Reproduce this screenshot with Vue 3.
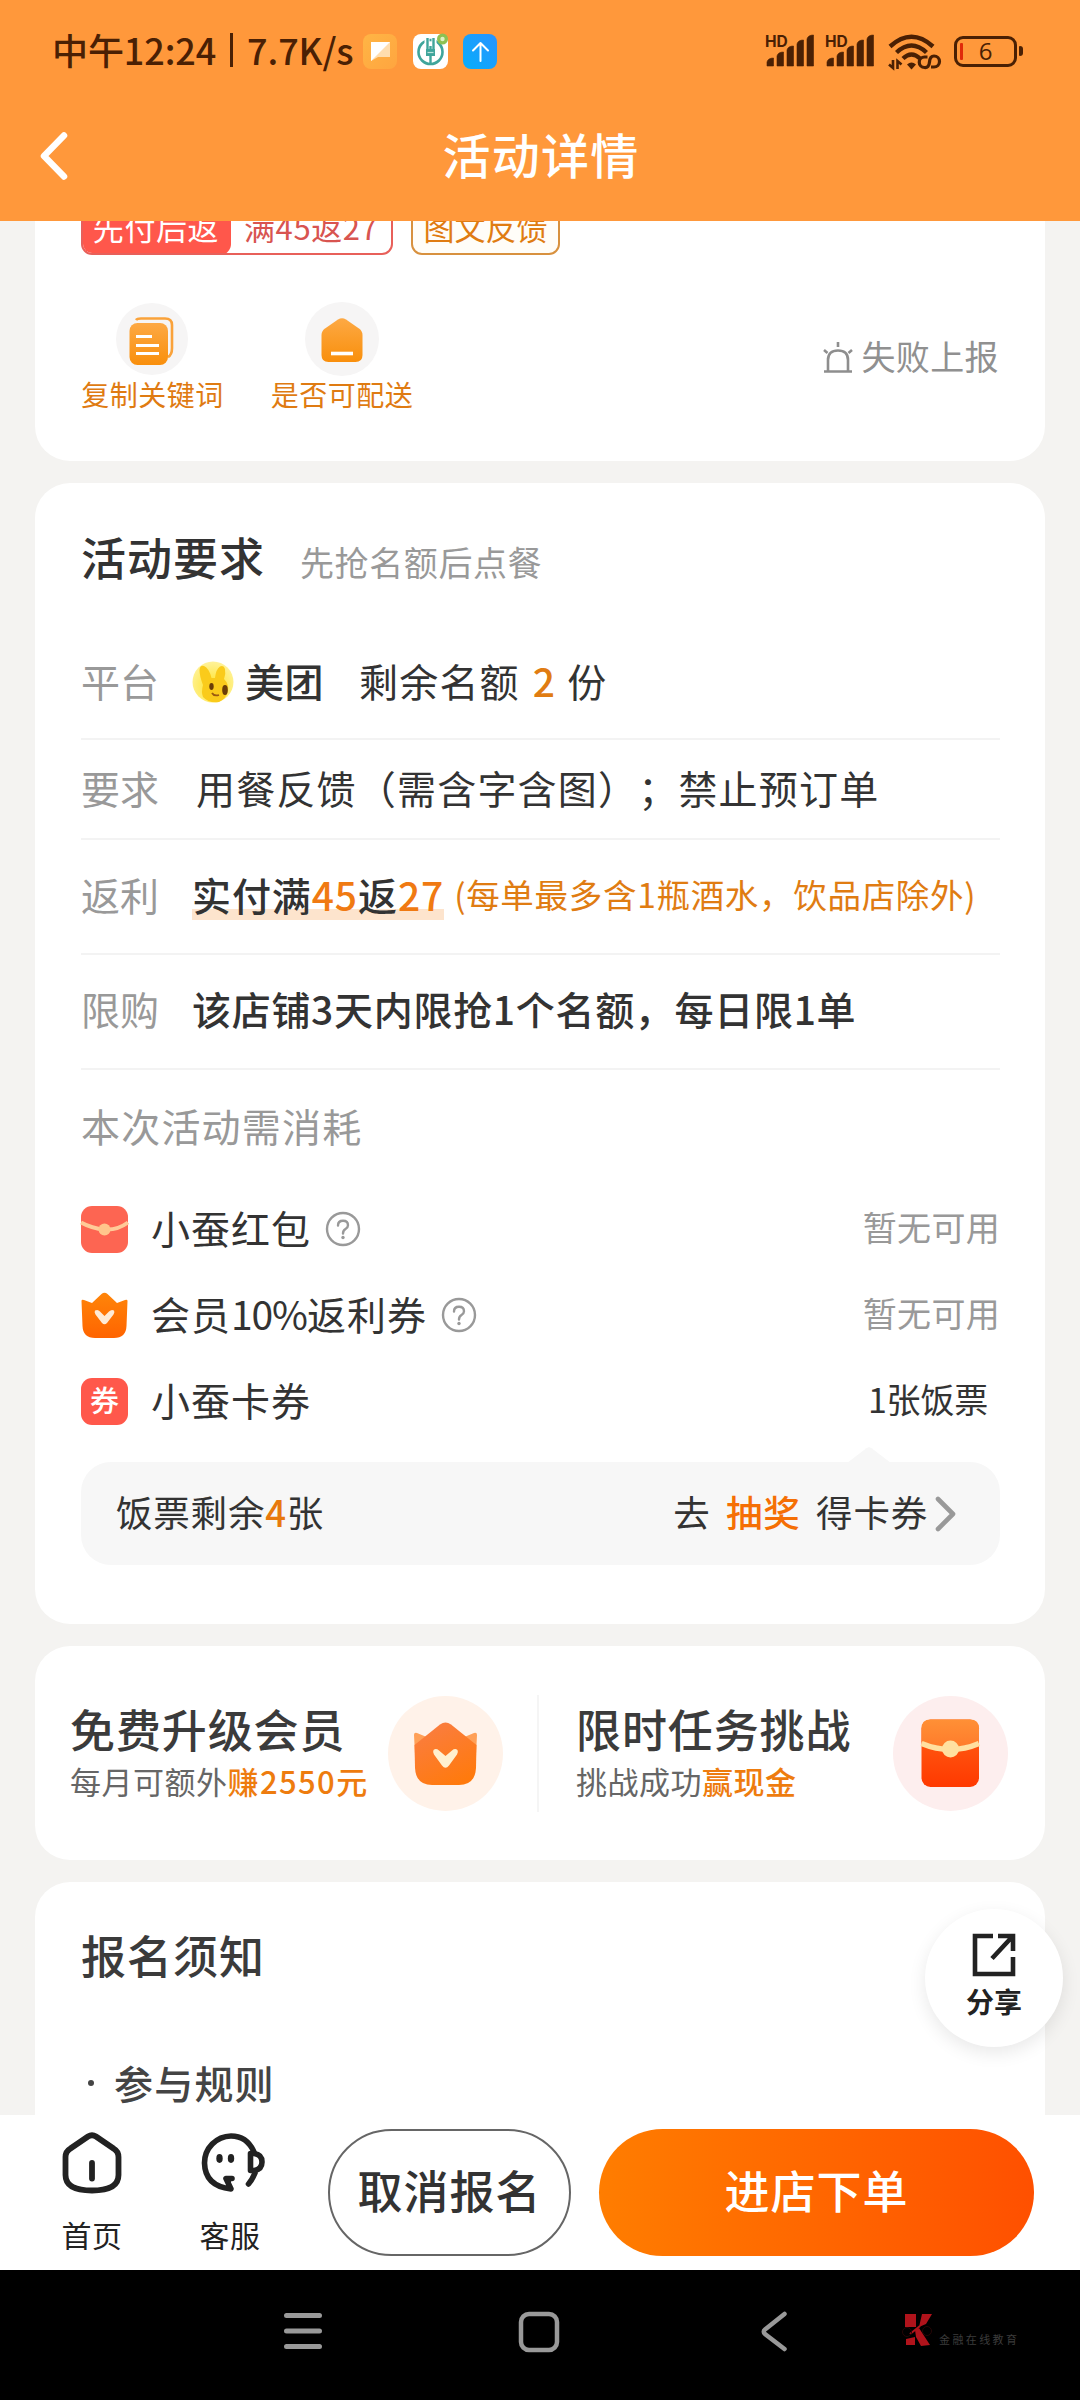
<script setup>
const assets = [
  { icon: 'packet', name: ['小蚕红包', '', ''], help: true, value: '暂无可用', muted: true },
  { icon: 'crown', name: ['会员', '10%', '返利券'], help: true, value: '暂无可用', muted: true },
  { icon: 'coupon', name: ['小蚕卡券', '', ''], help: false, value: '1张饭票', muted: false }
]
const bars = [
  { x: 0, h: 8 }, { x: 10, h: 14 }, { x: 20, h: 20 }, { x: 30, h: 26 }, { x: 40, h: 31 }
]
</script>

<template>
  <div class="page">
    <header class="header">
      <div class="status">
        <span class="clock">中午12:24<i class="sep"></i>7.7K/s</span>
        <svg class="app-ic" width="34" height="35" viewBox="0 0 34 35">
          <defs><linearGradient id="ga" x1="0" y1="0" x2="1" y2="1"><stop offset="0" stop-color="#FFB545" /><stop offset="1" stop-color="#FFA53F" /></linearGradient></defs>
          <rect width="34" height="35" rx="8" fill="url(#ga)" />
          <path d="M8 8H27V23H15L8 27Z" fill="#FFDDAE" />
          <path d="M8 8H27L8 27Z" fill="#fff" />
        </svg>
        <svg class="app-ic" width="35" height="35" viewBox="0 0 35 35">
          <rect width="35" height="35" rx="8" fill="#fff" />
          <circle cx="17.500" cy="18" r="12" fill="none" stroke="#3FA59B" stroke-width="2.600" />
          <path d="M14 5V16M21 5V16" fill="none" stroke="#fff" stroke-width="5" />
          <path d="M14.500 4V18M20.500 4V18M17.500 12V31" fill="none" stroke="#3FA59B" stroke-width="2.400" />
          <path d="M13 15H22V22H13Z" fill="#3FA59B" /><path d="M14.500 18.500H20.500" stroke="#BFE3DC" stroke-width="1.200" />
          <circle cx="29.500" cy="5" r="5.500" fill="#8CC152" /><circle cx="29.500" cy="5" r="2.200" fill="#DDF0C4" />
        </svg>
        <svg class="app-ic" width="34" height="35" viewBox="0 0 34 35">
          <defs><linearGradient id="gb" x1="0" y1="1" x2="1" y2="0"><stop offset="0" stop-color="#06AEFB" /><stop offset="1" stop-color="#2A93FF" /></linearGradient></defs>
          <rect width="34" height="35" rx="8" fill="url(#gb)" />
          <path d="M17.500 27V9M10 16.500L17.500 9L25 16.500" fill="none" stroke="#fff" stroke-width="2" stroke-linecap="round" stroke-linejoin="round" />
        </svg>
        <div class="status-right">
          <div v-for="n in 2" :key="n" class="signal">
            <span class="hd">HD</span>
            <svg width="48" height="32" viewBox="0 0 48 32">
              <path v-for="b in bars" :key="b.x" :d="`M${b.x} 31V${31 - b.h + 4}Q${b.x + 1} ${31 - b.h} ${b.x + 6.500} ${31 - b.h}V31Z`" fill="#4A2004" stroke="#4A2004" stroke-width="0.600" stroke-linejoin="round" />
            </svg>
          </div>
          <svg class="wifi" width="52" height="36" viewBox="0 0 52 36">
            <g fill="none" stroke="#4A2004" stroke-width="4.400">
              <path d="M2 12.500Q23.500 -7 45 12.500" />
              <path d="M8.500 18.500Q23.500 4.500 38.500 18.500" />
              <path d="M15 24.500Q23.500 16.500 32 24.500" />
            </g>
            <path d="M19 30.500Q23.500 26.500 28 30.500L23.500 35.500Z" fill="#4A2004" />
            <path d="M5 26V34L1 30.500M9.500 35V27L13.500 30.500" fill="none" stroke="#4A2004" stroke-width="2.600" />
            <path d="M39.500 23H36.500A5 5 0 0 0 36.500 33.500Q41 34 41.500 28T46 22A5.300 5.300 0 0 1 46 33H43" fill="none" stroke="#4A2004" stroke-width="3.200" />
          </svg>
          <div class="battery"><i class="level"></i><span>6</span></div>
          <i class="cap"></i>
        </div>
      </div>
      <div class="titlebar">
        <svg class="back" width="30" height="52" viewBox="0 0 30 52"><path d="M25 5.500L5 26L25 46.500" fill="none" stroke="#fff" stroke-width="6.500" stroke-linecap="round" stroke-linejoin="round" /></svg>
        <h1>活动详情</h1>
      </div>
    </header>

    <main class="content">
      <section class="card top-card">
        <div class="tags">
          <div class="tag red"><span class="tag-fill">先付后返</span><span class="tag-txt">满45返27</span></div>
          <div class="tag amber">图文反馈</div>
        </div>
        <div class="actions">
          <div class="action">
            <svg width="74" height="74" viewBox="0 0 74 74">
              <defs><linearGradient id="gc" x1="0" y1="0" x2="0" y2="1"><stop offset="0" stop-color="#FDA944" /><stop offset="1" stop-color="#F98F0C" /></linearGradient></defs>
              <circle cx="37" cy="37" r="36" fill="#F6F5F5" />
              <path d="M21 18Q22 16.500 26 16.500H50Q57 16.500 57 23V46Q57 53 53 55" fill="none" stroke="#FAA23A" stroke-width="2.600" />
              <rect x="14.500" y="21" width="38.500" height="42" rx="8" fill="url(#gc)" />
              <path d="M21 34.500H37M21 43.500H44M21 51.500H44" stroke="#fff" stroke-width="3.200" />
            </svg>
            <span>复制关键词</span>
          </div>
          <div class="action">
            <svg width="74" height="74" viewBox="0 0 74 74">
              <circle cx="37" cy="37" r="37" fill="#F6F5F5" />
              <path d="M16.500 33Q16.500 29 20 26.500L33 17.500Q37 14.800 41 17.500L54 26.500Q57.500 29 57.500 33V53Q57.500 60 50.500 60H23.500Q16.500 60 16.500 53Z" fill="url(#gc)" />
              <path d="M26 51.500H48" stroke="#fff" stroke-width="3.600" />
            </svg>
            <span>是否可配送</span>
          </div>
          <div class="report">
            <svg width="32" height="34" viewBox="0 0 32 34"><path d="M2 31.500H30M6 31V20Q6 10.500 16 10.500T26 20V31M16 2V7M2 10L5.500 13M30 10L26.500 13" fill="none" stroke="#8E8E8E" stroke-width="2.600" /></svg>
            <span>失败上报</span>
          </div>
        </div>
      </section>

      <section class="card require">
        <div class="head"><h2>活动要求</h2><span>先抢名额后点餐</span></div>
        <div class="row r1">
          <label>平台</label>
          <svg class="mt" width="42" height="42" viewBox="0 0 42 42">
            <defs><radialGradient id="gm" cx=".5" cy=".6" r=".6"><stop offset="0" stop-color="#FFE327" /><stop offset="1" stop-color="#FFF29A" /></radialGradient></defs>
            <circle cx="21" cy="21" r="20.500" fill="url(#gm)" />
            <path d="M7.500 9Q8 4 12 5Q17 7 19.500 17H23Q24 8 28 5.500Q32 4 33 8Q34 13 32 18Q37 23 36 30Q34 38 27 41Q17 42.500 11 36Q9 31 11 24Q7.500 15 7.500 9Z" fill="#FACB1B" />
            <ellipse cx="19.500" cy="25.500" rx="2.200" ry="3.400" fill="#6B3D08" /><ellipse cx="33" cy="29" rx="2.800" ry="5" fill="#6B3D08" />
            <path d="M20 32Q22 35.500 27 34" fill="none" stroke="#9A5A10" stroke-width="1.800" />
          </svg>
          <b class="platform">美团</b><span class="quota">剩余名额<em>2</em>份</span>
        </div>
        <div class="row r2"><label>要求</label><span class="need">用餐反馈（需含字含图）；禁止预订单</span></div>
        <div class="row r3">
          <label>返利</label>
          <span class="rebate">实付满<em>45</em>返<em>27</em></span>
          <span class="note">(每单最多含1瓶酒水，饮品店除外)</span>
        </div>
        <div class="row r4"><label>限购</label><span class="limit">该店铺3天内限抢1个名额，每日限1单</span></div>
        <div class="cost">本次活动需消耗</div>
        <div v-for="a in assets" :key="a.icon" class="asset">
          <svg v-if="a.icon === 'packet'" width="47" height="47" viewBox="0 0 47 47">
            <rect width="47" height="47" rx="11" fill="#FD6552" />
            <path d="M0 16.500Q11 22.500 23.500 23.500T47 16.500" fill="none" stroke="#FFCB98" stroke-width="4" />
            <circle cx="23.500" cy="23.500" r="6" fill="#FFC68C" />
          </svg>
          <svg v-else-if="a.icon === 'crown'" width="47" height="47" viewBox="0 0 47 47">
            <defs><linearGradient id="gd" x1="0" y1="0" x2="0" y2="1"><stop offset="0" stop-color="#FF8509" /><stop offset="1" stop-color="#FF6400" /></linearGradient></defs>
            <path d="M0.500 9Q0.500 7 3 8L11 11L20.500 2Q23.500 -0.500 26.500 2L36 11L44 8Q46.500 7 46.500 9L45.500 34Q45 46 33 46H14Q2 46 1.500 34Z" fill="url(#gd)" />
            <path d="M14 18.500Q17 17 19 19.500L23.500 24L28 19.500Q30.500 17 33 18.500Q34 20 32.500 22.500L26 31Q23.500 33.500 21 31L14.500 22.500Q13 20 14 18.500Z" fill="#FFEBD6" />
          </svg>
          <span v-else class="coupon">券</span>
          <span class="asset-name">{{ a.name[0] }}<i>{{ a.name[1] }}</i>{{ a.name[2] }}</span>
          <svg v-if="a.help" class="help" width="36" height="36" viewBox="0 0 36 36">
            <circle cx="18" cy="18" r="16" fill="none" stroke="#999" stroke-width="2.400" />
            <path d="M13 14.500Q13 9.800 18 9.800T23 14.300Q23 16.500 20.500 18T18 22.500" fill="none" stroke="#999" stroke-width="2.400" stroke-linecap="round" />
            <circle cx="18" cy="26.500" r="1.700" fill="#999" />
          </svg>
          <span :class="['asset-val', { muted: a.muted }]">{{ a.value }}</span>
        </div>
        <div class="ticket">
          <i class="caret"></i>
          <span>饭票剩余<em>4</em>张</span>
          <span class="go">去<b>抽奖</b>得卡券</span>
          <svg width="24" height="38" viewBox="0 0 24 38"><path d="M4 4L19 19L4 34" fill="none" stroke="#999" stroke-width="4.600" stroke-linecap="round" stroke-linejoin="round" /></svg>
        </div>
      </section>

      <section class="card promo">
        <div class="promo-item">
          <div class="promo-txt"><h3>免费升级会员</h3><p>每月可额外<b class="earn">赚2550元</b></p></div>
          <svg width="115" height="115" viewBox="0 0 115 115">
            <defs>
              <linearGradient id="ge" x1="0.200" y1="0" x2="0.700" y2="1"><stop offset="0" stop-color="#FA7D42" /><stop offset="1" stop-color="#FF7A0C" /></linearGradient>
            </defs>
            <circle cx="57.500" cy="57.500" r="57.500" fill="#FFF2E9" />
            <path d="M26 39Q26 36 29 37L41 42H74L86 37Q89 36 89 39L88 58H27Z" fill="#FFA057" />
            <path d="M26.500 49L52 28.500Q57.500 24.500 63 28.500L88.500 49L88 72Q87 89 71 89H44Q28 89 27 72Z" fill="url(#ge)" />
            <path d="M45.500 54Q48 52 51 54.500L57.500 60L64 54.500Q67 52 69.500 54Q70.500 56 69 58.500L61 69.500Q57.500 74 54 69.500L46 58.500Q44.500 56 45.500 54Z" fill="#FFF0CF" />
          </svg>
        </div>
        <div class="promo-item second">
          <div class="promo-txt"><h3>限时任务挑战</h3><p>挑战成功<b>赢现金</b></p></div>
          <svg width="115" height="115" viewBox="0 0 115 115">
            <defs>
              <linearGradient id="gf" x1="0" y1="0" x2="0" y2="1"><stop offset="0" stop-color="#FF9036" /><stop offset="1" stop-color="#FF7A2A" /></linearGradient>
              <linearGradient id="gg" x1="0" y1="0" x2="0" y2="1"><stop offset="0" stop-color="#FF6318" /><stop offset="1" stop-color="#FF3900" /></linearGradient>
            </defs>
            <circle cx="57.500" cy="57.500" r="57.500" fill="#FDEEEE" />
            <rect x="28.500" y="23.500" width="57.500" height="67.500" rx="9" fill="url(#gg)" />
            <path d="M28.500 46V32.500Q28.500 23.500 37.500 23.500H77Q86 23.500 86 32.500V46L57.500 53Z" fill="url(#gf)" />
            <path d="M28.500 47.500Q43 53.500 57.500 53.500T86 47.500" fill="none" stroke="#FFE0A0" stroke-width="5.500" />
            <circle cx="57.500" cy="53" r="8.500" fill="#FFE0A0" />
          </svg>
        </div>
      </section>

      <section class="card notice">
        <h3>报名须知</h3>
        <p><i></i>参与规则</p>
      </section>
    </main>

    <div class="share">
      <svg width="44" height="44" viewBox="0 0 44 44"><path d="M21 3H3V41H41V24M26 3H41V18M20 25.500L40 4" fill="none" stroke="#222" stroke-width="4.600" /></svg>
      <span>分享</span>
    </div>

    <footer class="bottom">
      <div class="tab">
        <svg width="66" height="62" viewBox="0 0 66 62">
          <path d="M6.500 25Q6.500 19.500 11.500 16.500L29 4.500Q33 2 37 4.500L54.500 16.500Q59.500 19.500 59.500 25V43Q59.500 58.500 33 58.500T6.500 43Z" fill="none" stroke="#222" stroke-width="5.800" />
          <path d="M33 31V46.500" stroke="#222" stroke-width="5.800" stroke-linecap="round" />
        </svg>
        <span>首页</span>
      </div>
      <div class="tab">
        <svg class="kf" width="66" height="62" viewBox="0 0 66 62">
          <g fill="none" stroke="#222" stroke-width="5.600" stroke-linecap="round" stroke-linejoin="round">
            <path d="M54 20Q47 4 31 4A27 27 0 0 0 4.500 31Q5 54 31 57L26 46.500H32" />
            <path d="M55 41Q52 48 48.500 52" />
            <path d="M50.500 21.500H54Q62 22.500 62 30T54 38.500H50.500Z" />
          </g>
          <path d="M24 46H32L29 57Z" fill="#222" />
          <ellipse cx="19.500" cy="26.500" rx="3.200" ry="4.400" fill="#222" /><ellipse cx="31" cy="26.500" rx="3.200" ry="4.400" fill="#222" />
        </svg>
        <span>客服</span>
      </div>
      <button class="cancel">取消报名</button>
      <button class="order">进店下单</button>
    </footer>

    <nav class="sysnav">
      <svg class="menu" width="40" height="40" viewBox="0 0 40 40"><path d="M3.500 4.500H36.500M3.500 20H36.500M3.500 35.500H36.500" stroke="#999" stroke-width="5" stroke-linecap="round" /></svg>
      <svg class="home" width="42" height="42" viewBox="0 0 42 42"><rect x="3" y="3" width="36" height="36" rx="8" fill="none" stroke="#999" stroke-width="4.500" /></svg>
      <svg class="prev" width="28" height="42" viewBox="0 0 28 42"><path d="M24.500 3L5 18.500Q2.500 20.500 5 23L24.500 38" fill="none" stroke="#999" stroke-width="4.500" stroke-linecap="round" /></svg>
      <div class="brand">
        <svg width="28" height="34" viewBox="0 0 28 34">
          <path d="M1 1H12V14H1ZM18 1H28L22 11L15 14ZM2 26L11 24V32H2ZM11 17L15 15L26 32L17 33L12 24Z" fill="#B0131B" />
          <path d="M6 21L16 13" stroke="#B0131B" stroke-width="2" />
          <circle cx="3" cy="19" r="4.500" fill="none" stroke="#250606" /><circle cx="23" cy="18" r="4.500" fill="none" stroke="#250606" />
        </svg>
        <span>金融在线教育</span>
      </div>
    </nav>
  </div>
</template>

<style>
body { margin: 0; background: #f4f3f1; }
</style>

<style scoped>
.page { position: relative; width: 1080px; height: 2400px; display: flex; flex-direction: column; overflow: hidden; background: #f4f3f1; color: #333; font-family: "Noto Sans CJK SC", "Noto Sans", sans-serif; white-space: nowrap; text-spacing-trim: space-all; }
h1, h2, h3, p { margin: 0; font-weight: 400; }
em, i { font-style: normal; }
svg { display: block; flex: none; overflow: visible; }
.header { height: 221px; flex: none; background: #ff983b; }
.status { height: 102px; display: flex; align-items: center; padding-left: 52px; }
.clock { width: 311px; display: flex; align-items: center; font-size: 36px; font-weight: 500; line-height: 50px; letter-spacing: -.1px; color: #4a2004; margin-top: -4px; }
.sep { width: 3px; height: 34px; margin: 2px 14px 0 14px; background: #4a2004; }
.app-ic { margin-right: 15.500px; }
.status-right { margin-left: auto; display: flex; align-items: center; padding-right: 57px; }
.signal { position: relative; width: 60px; height: 32px; left: -1px; }
.signal svg { margin-left: 2px; }
.hd { position: absolute; left: 0; top: -1px; font: 700 15.500px/15px Inter, sans-serif; color: #4a2004; }
.wifi { margin: 1px 14px 0 2px; }
.battery { box-sizing: border-box; width: 63px; height: 31px; border: 3.500px solid #4a2004; border-radius: 9px; display: flex; align-items: center; justify-content: center; position: relative; font: 500 24px/24px "Open Sans", sans-serif; color: #4a2004; }
.level { position: absolute; left: 3px; top: 4px; width: 3px; height: 17px; background: #e02a0a; border-radius: 1px; }
.cap { width: 4px; height: 10px; margin-left: 2px; background: #4a2004; border-radius: 1px 3px 3px 1px; }
.titlebar { height: 112px; position: relative; display: flex; align-items: center; justify-content: center; }
.titlebar h1 { font-size: 48px; font-weight: 500; letter-spacing: 1.200px; line-height: 60px; color: #fff; margin-top: -10px; padding-left: 2px; }
.back { position: absolute; left: 39px; top: 28px; }

.content { height: 1894px; flex: none; overflow: hidden; }
.card { box-sizing: border-box; margin: 0 35px 22px; background: #fff; border-radius: 35px; }
.top-card { display: flow-root; height: 240px; border-top-left-radius: 0; border-top-right-radius: 0; padding: 0 46px; }
.tags { display: flex; gap: 18px; margin-top: -17px; }
.tag { box-sizing: border-box; height: 51px; border: 2px solid #e8605a; border-radius: 11px; display: flex; font-size: 31px; line-height: 43px; overflow: hidden; }
.red { width: 312px; color: #d85450; }
.tag-fill { width: 150px; background: #ff574b; color: #fff; border-radius: 0 0 11px 0; text-align: center; margin: -2px 0 -2px -2px; padding-top: 1px; letter-spacing: .6px; }
.tag-txt { padding-left: 13px; letter-spacing: .6px; margin-top: -1px; }
.amber { width: 149px; border-color: #d8913f; color: #e07c12; background: #fffdf8; justify-content: center; line-height: 41px; }
.actions { display: flex; margin-top: 47px; }
.action { width: 142px; margin-right: 48px; display: flex; flex-direction: column; align-items: center; }
.action span { font-size: 28px; line-height: 36px; letter-spacing: .5px; color: #df7b12; }
.action:first-child span { padding-left: 1px; }
.report { margin: 33px 0 0 auto; display: flex; align-items: center; height: 44px; gap: 7px; font-size: 34px; line-height: 44px; color: #909090; }
.report span { margin-top: -3px; letter-spacing: .4px; }

.require { height: 1141px; padding: 44px 45px 0 46px; font-size: 39px; letter-spacing: 1.200px; }
.head { height: 98px; display: flex; align-items: baseline; }
.head h2 { font-size: 45px; line-height: 60px; font-weight: 500; letter-spacing: 1px; }
.head span { font-size: 34px; color: #999; letter-spacing: .6px; margin-left: 35px; }
.row { box-sizing: border-box; display: flex; align-items: center; border-bottom: 2px solid #f3f3f3; line-height: 52px; padding-bottom: 4px; }
.row label { width: 111px; color: #999; letter-spacing: 0; }
.r1 { height: 115px; padding-bottom: 3px; }
.r2 { height: 100px; padding-bottom: 5px; }
.r3 { height: 115px; padding-bottom: 6px; }
.r4 { height: 115px; padding-bottom: 8px; }
.mt { margin-top: 3px; }
.platform { font-weight: 500; margin-left: 11px; letter-spacing: .5px; }
.quota { margin-left: 35px; }
.quota em { color: #e07c12; font-weight: 500; margin: 0 11px 0 13px; }
.need { margin-left: 4px; }
.rebate { font-weight: 500; letter-spacing: .9px; background: linear-gradient(#fde4cd, #fde4cd) 0 41px / 100% 11px no-repeat; }
.rebate em { color: #f07a12; }
.note { font-size: 33.500px; color: #e07c12; letter-spacing: .7px; margin-left: 10px; }
.limit { font-weight: 500; letter-spacing: .7px; }
.cost { height: 116px; line-height: 110px; color: #999; }
.asset { height: 86px; display: flex; align-items: center; line-height: 50px; }
.asset-name { margin: -4px 0 0 23px; letter-spacing: 1px; }
.asset-name i { letter-spacing: -1.100px; }
.help { margin-left: 14px; }
.asset-val { margin: -4px 12px 0 auto; font-size: 34px; letter-spacing: -.2px; }
.asset-val.muted { color: #999; margin-right: 0; letter-spacing: .3px; }
.coupon { width: 47px; height: 47px; border-radius: 11px; background: #ff584b; color: #fff; font-size: 29px; line-height: 43px; text-align: center; letter-spacing: 0; font-weight: 500; }
.ticket { position: relative; margin-top: 18px; height: 103px; border-radius: 30px; background: #f7f7f7; display: flex; align-items: center; padding: 0 42px 0 35px; font-size: 36.500px; letter-spacing: .8px; line-height: 50px; }
.ticket span { margin-top: -4px; }
.ticket em { color: #e8790c; font-weight: 500; }
.ticket .go { margin-left: auto; margin-right: 6px; }
.go b { color: #f56f05; font-weight: 500; margin: 0 15.500px; }
.caret { position: absolute; left: 766px; top: -15px; width: 44px; height: 16px; background: #f7f7f7; clip-path: polygon(0 100%, 44% 8%, 50% 0, 56% 8%, 100% 100%); }

.promo { height: 214px; display: flex; align-items: center; }
.promo-item { height: 117px; width: 504px; display: flex; align-items: center; box-sizing: border-box; padding: 0 34px 0 35px; justify-content: space-between; border-right: 2px solid #f5f5f5; }
.promo-item.second { width: 506px; padding: 0 37px; border: 0; }
.promo h3 { font-size: 45px; line-height: 58px; letter-spacing: .9px; font-weight: 500; color: #3b3b3b; margin-top: -5px; }
.promo p { font-size: 31px; line-height: 40px; letter-spacing: .5px; color: #666; margin-top: 3px; }
.promo b { font-weight: 500; color: #ee7c0e; }
.promo .earn { letter-spacing: 1.400px; }

.notice { height: 400px; padding: 43px 46px; }
.notice h3 { font-size: 45px; line-height: 60px; letter-spacing: 1px; font-weight: 500; color: #3b3b3b; }
.notice p { display: flex; align-items: center; margin-top: 70px; font-size: 39px; line-height: 54px; letter-spacing: 1.200px; font-weight: 500; color: #444; }
.notice i { width: 6px; height: 6px; border-radius: 50%; background: #444; margin: 2px 20px 0 7px; }

.share { position: absolute; left: 925px; top: 1909px; width: 138px; height: 138px; border-radius: 50%; background: #fff; box-shadow: 0 6px 18px rgba(0, 0, 0, .09); display: flex; flex-direction: column; align-items: center; color: #222; }
.share svg { margin-top: 24px; }
.share span { font-size: 28px; font-weight: 700; line-height: 36px; margin-top: 6px; }

.bottom { height: 155px; flex: none; background: #fff; display: flex; align-items: flex-start; padding-left: 23px; }
.tab { width: 138px; display: flex; flex-direction: column; align-items: center; padding-top: 17px; font-size: 30px; line-height: 40px; color: #222; letter-spacing: .5px; }
.tab span { margin-top: 20px; }
.kf { margin-left: 6px; }
.bottom button { box-sizing: border-box; height: 127px; margin-top: 14px; border-radius: 64px; font: 500 45px/60px "Noto Sans CJK SC", sans-serif; letter-spacing: 1px; padding: 0 0 5px; }
.cancel { width: 243px; margin-left: 29px; border: 2.500px solid #666; background: #fff; color: #333; }
.order { width: 435px; margin-left: 28px; border: 0; color: #fff; background: linear-gradient(90deg, #ff7d00, #ff5000); }

.sysnav { height: 130px; flex: none; background: #000; display: flex; align-items: flex-start; padding-top: 41px; box-sizing: border-box; }
.menu { margin-left: 283px; }
.home { margin-left: 195px; }
.prev { margin-left: 200px; }
.brand { margin-left: 116px; display: flex; align-items: flex-end; height: 36px; }
.brand span { font-size: 11px; line-height: 16px; letter-spacing: 2.400px; color: #3c3c3c; margin-left: 7px; }
</style>
